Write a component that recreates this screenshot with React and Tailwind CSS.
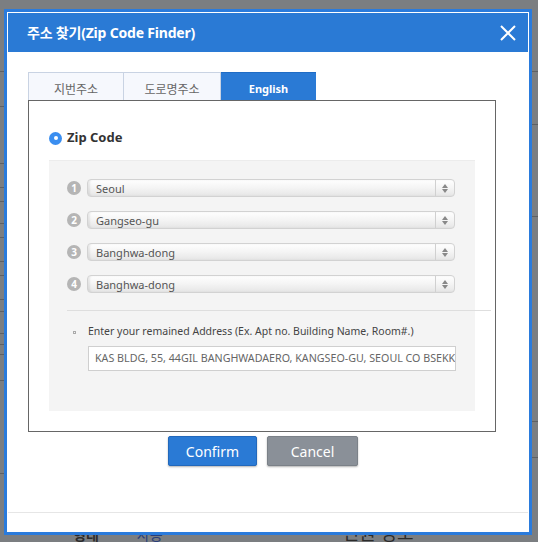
import React from 'react';

const FONT = { fontFamily: '"Noto Sans", "Noto Sans CJK KR", sans-serif' };

const selects = ['Seoul', 'Gangseo-gu', 'Banghwa-dong', 'Banghwa-dong'];

const leftRows = [72, 35, 57, 24, 14, 22, 14, 24, 14, 24, 12, 22, 11, 10, 26, 93];
const rightRows = [72, 53, 92, 205, 36];

const SelectBox = ({ n, value }) => (
    <div className="flex items-center h-[18px]">
        <div className="w-[14px] h-[14px] rounded-full bg-[#b5b5b5] text-white text-[10px] font-bold flex items-center justify-center leading-none">{n}</div>
        <div className="ml-[6px] w-[368px] h-[18px] rounded-[4px] border border-[#d2d2d2] bg-gradient-to-b from-[#ffffff] via-[#f4f4f4] to-[#e6e6e6] flex items-center shadow-[inset_2px_0_2px_rgba(0,0,0,0.08)]">
            <span className="flex-1 pl-[8px] text-[11px] text-[#555] leading-none">{value}</span>
            <div className="w-[19px] h-full border-l border-[#d0d0d0] flex flex-col items-center justify-center gap-[1px]">
                <span className="block w-0 h-0 border-x-[3px] border-x-transparent border-b-[4px] border-b-[#888]"></span>
                <span className="block w-0 h-0 border-x-[3px] border-x-transparent border-t-[4px] border-t-[#888]"></span>
            </div>
        </div>
    </div>
);

const App = () => {
    return (
        <div className="relative w-[538px] h-[542px] overflow-hidden bg-[#7b7e81]" style={FONT}>
            {/* page behind the overlay */}
            <div className="flex h-full">
                <div className="w-[4px] flex flex-col">
                    {leftRows.map((h, i) => (
                        <div key={i} className="border-b border-[#5e6063]" style={{ height: h }}></div>
                    ))}
                </div>
                <div className="flex-1 flex flex-col justify-end">
                    <div className="flex items-end h-[8px] text-[14px] leading-none text-[#2b2b2b] font-bold">
                        <span className="ml-[69px]">형태</span>
                        <span className="ml-[38px] text-[#2a3f7a] font-normal">사용</span>
                        <span className="ml-[180px] text-[18px] font-normal">민원 정보</span>
                    </div>
                </div>
                <div className="w-[6px] flex flex-col text-[12px] leading-none text-[#333]">
                    {rightRows.map((h, i) => (
                        <div key={i} className="border-b border-[#5e6063]" style={{ height: h }}></div>
                    ))}
                </div>
            </div>

            {/* dialog */}
            <div className="absolute left-[4px] top-[9px] w-[528px] h-[526px] border-[3px] border-[#2a7bdc] bg-white p-[1px] flex flex-col">
                <div className="h-[39px] bg-[#2a7ad5] flex items-center justify-between pl-[19px] pr-[10px]">
                    <span className="text-white text-[14px] font-bold tracking-[-0.2px]">주소 찾기(Zip Code Finder)</span>
                    <svg width="18" height="18" viewBox="0 0 18 18" className="mr-[1px]">
                        <path d="M2 2 L16 16 M16 2 L2 16" stroke="white" strokeWidth="2" />
                    </svg>
                </div>

                <div className="flex-1 px-[20px] pt-[20px] flex flex-col">
                    <div className="flex h-[28px]">
                        <div className="w-[96px] border border-b-0 border-[#c9d3e3] bg-[#f6f8fd] text-[12px] text-[#666] flex items-center justify-center pt-[6px]">지번주소</div>
                        <div className="w-[97px] border border-l-0 border-b-0 border-[#c9d3e3] bg-[#f6f8fd] text-[12px] text-[#666] flex items-center justify-center pt-[6px]">도로명주소</div>
                        <div className="w-[95px] bg-[#2a7ad5] border-t border-[#1f6cc5] text-[11px] font-bold text-white flex items-center justify-center pt-[6px]">English</div>
                    </div>

                    <div className="w-[468px] h-[332px] border border-[#666] pt-[31px] px-[20px]">
                        <div className="flex items-center h-[12px]">
                            <div className="w-[13px] h-[13px] rounded-full bg-[#3a8ef0] flex items-center justify-center">
                                <div className="w-[4px] h-[4px] rounded-full bg-white"></div>
                            </div>
                            <span className="ml-[5px] text-[13px] font-bold text-[#333]">Zip Code</span>
                        </div>

                        <div className="mt-[16px] w-[426px] h-[251px] bg-[#f4f4f4] border-t border-[#ececec] pt-[18px] pl-[18px]">
                            <div className="flex flex-col gap-[14px]">
                                {selects.map((v, i) => (
                                    <SelectBox key={i} n={i + 1} value={v} />
                                ))}
                            </div>
                            <div className="mt-[17px] w-[424px] border-t border-[#dedede]"></div>
                            <div className="mt-[15px] flex items-center h-[12px]">
                                <span className="ml-[6px] w-[3px] h-[3px] border border-[#aaa]"></span>
                                <span className="ml-[12px] text-[10.5px] text-[#444] whitespace-nowrap">Enter your remained Address (Ex. Apt no. Building Name, Room#.)</span>
                            </div>
                            <div className="mt-[8px] ml-[21px] w-[368px] h-[25px] bg-white border border-[#cfcfcf] flex items-center overflow-hidden">
                                <span className="pl-[6px] text-[10.7px] text-[#666] whitespace-nowrap">KAS BLDG, 55, 44GIL BANGHWADAERO, KANGSEO-GU, SEOUL CO BSEKKIO</span>
                            </div>
                        </div>
                    </div>

                    <div className="mt-[4px] pl-[140px] flex gap-[10px]">
                        <button className="w-[89px] h-[30px] bg-[#2a7ad5] border border-[#2268bb] rounded-[2px] text-white text-[14px] shadow-[0_1px_2px_rgba(0,0,0,0.3)]">Confirm</button>
                        <button className="w-[91px] h-[30px] bg-[#8a9098] border border-[#7b8188] rounded-[2px] text-white text-[14px] shadow-[0_1px_2px_rgba(0,0,0,0.3)]">Cancel</button>
                    </div>
                </div>

                <div className="h-[19px] border-t border-[#e6e6e6]"></div>
            </div>
        </div>
    );
};

export default App;
